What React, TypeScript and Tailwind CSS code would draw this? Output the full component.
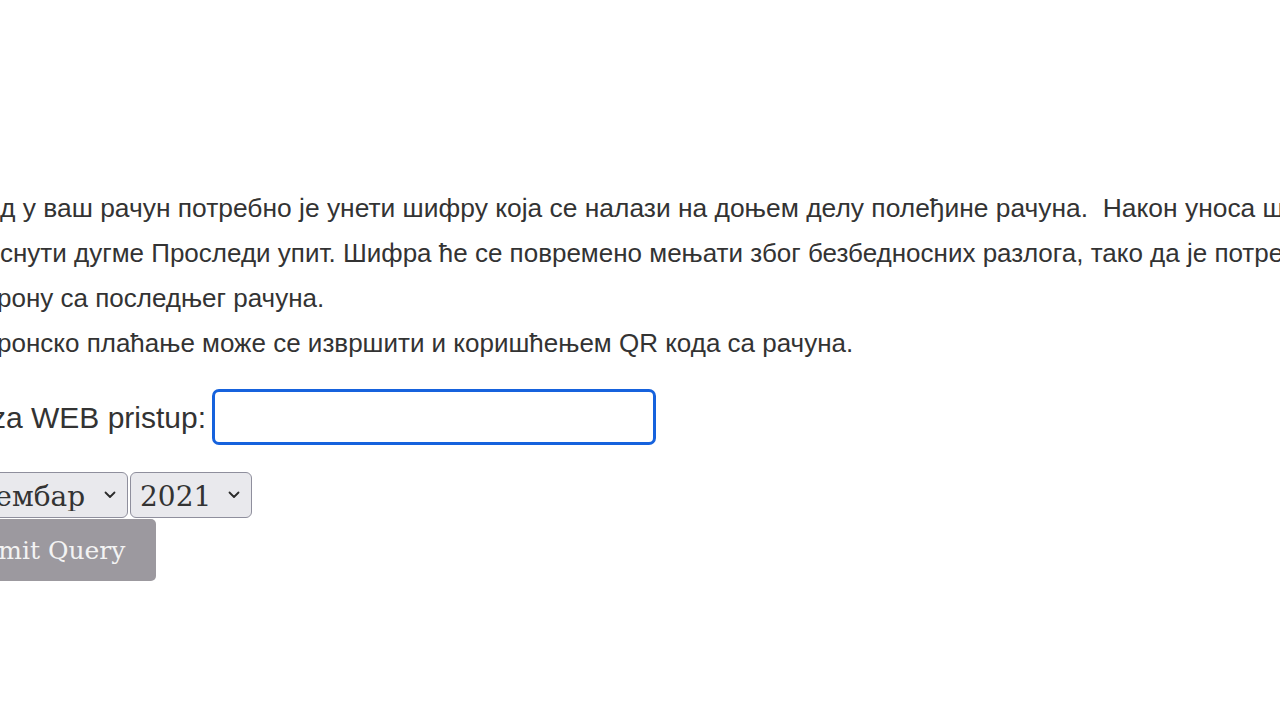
import { ReactNode } from "react";

// text that lies left of the window: right-aligned in a zero-width box so it ends at x=0
function Cut({ children }: { children: ReactNode }) {
  return <span className="inline-flex w-0 justify-end whitespace-pre">{children}</span>;
}

function Chevron() {
  return (
    <svg
      className="pointer-events-none absolute right-[12px] top-1/2 -translate-y-1/2"
      width="12"
      height="8"
      viewBox="0 0 12 8"
      fill="none"
    >
      <path d="M1.5 1.5 6 6l4.5-4.5" stroke="#2b2b2b" strokeWidth="1.8" strokeLinecap="round" strokeLinejoin="round" />
    </svg>
  );
}

const months = ["Јануар", "Фебруар", "Март", "Април", "Мај", "Јун", "Јул", "Август", "Септембар", "Октобар", "Новембар", "Децембар"];
const years = ["2019", "2020", "2021"];

export default function App() {
  return (
    <div className="h-[720px] w-[1280px] overflow-hidden bg-white">
      <div className="pt-[186px] font-['Liberation_Sans',Arial,sans-serif] text-[26px] leading-[45px] text-[#333]">
        {/* Intro */}
        <div className="whitespace-pre text-[26.4px]">
          <Cut>Да бисте имали уви</Cut>д у ваш рачун потребно је унети шифру која се налази на доњем делу полеђине рачуна.  Након уноса шифре потребно је
        </div>
        <div className="whitespace-pre">
          <Cut>потребно је прити</Cut>снути дугме Проследи упит. Шифра ће се повремено мењати због безбедносних разлога, тако да је потребно уносити шифру
        </div>
        <div className="-ml-[3px] whitespace-pre">
          <Cut>са полеђине, односно са ст</Cut>рону са последњег рачуна.
        </div>
        <div className="-ml-[3px] whitespace-pre">
          <Cut>Елект</Cut>ронско плаћање може се извршити и коришћењем QR кода са рачуна.
        </div>

        {/* Form */}
        <form className="mt-[23px]">
          <div className="flex items-center">
            <label htmlFor="sifra" className="-ml-[9px] whitespace-pre text-[30px]">
              <Cut>Šifra </Cut>za WEB pristup:
            </label>
            <input
              id="sifra"
              type="text"
              className="ml-[6px] h-[56px] w-[444px] rounded-[7px] border-[3px] border-[#1662dd] bg-white px-2 outline-none"
            />
          </div>

          <div className="mt-[27px] flex font-['DejaVu_Serif',serif] text-[28px] leading-none text-[#333]">
            <span className="relative -ml-[67px]">
              <select
                defaultValue="Децембар"
                className="h-[46px] w-[195px] appearance-none rounded-[6px] border-[1.5px] border-[#8f8f9d] bg-[#e9e9ed] pl-[4px] pt-[3px]"
              >
                {months.map((m) => (
                  <option key={m}>{m}</option>
                ))}
              </select>
              <Chevron />
            </span>
            <span className="relative ml-[2px]">
              <select
                defaultValue="2021"
                className="h-[46px] w-[122px] appearance-none rounded-[6px] border-[1.5px] border-[#8f8f9d] bg-[#e9e9ed] pl-[9px] pt-[3px]"
              >
                {years.map((y) => (
                  <option key={y}>{y}</option>
                ))}
              </select>
              <Chevron />
            </span>
          </div>

          <button
            type="submit"
            className="-ml-[65px] mt-[1px] h-[62px] w-[221px] rounded-[5px] bg-[#9c999f] pl-[14px] text-left font-['DejaVu_Serif',serif] text-[25px] text-[#f3f3f3]"
          >
            Submit Query
          </button>
        </form>
      </div>
    </div>
  );
}
